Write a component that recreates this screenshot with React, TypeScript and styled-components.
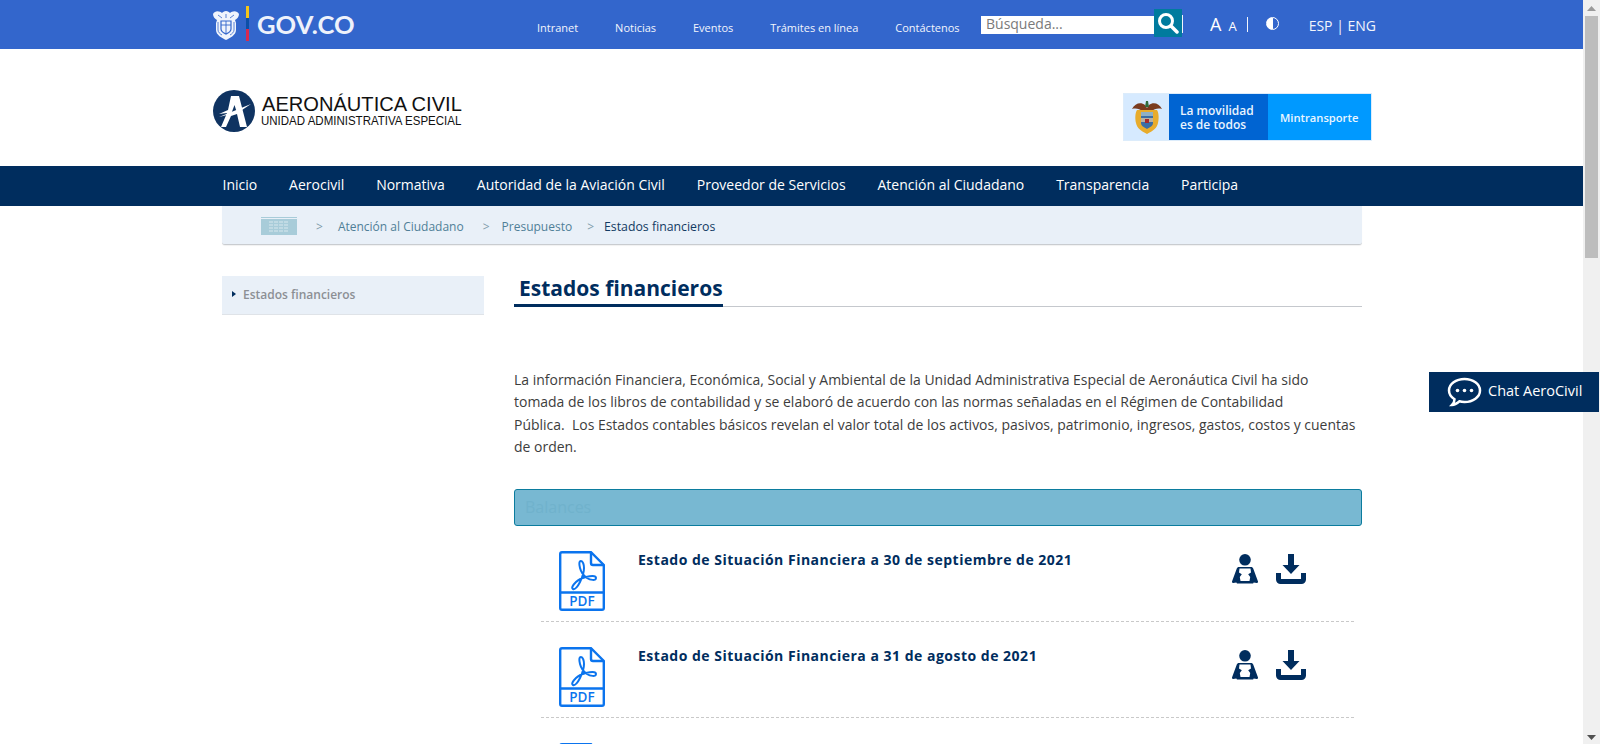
import React from "react";
import styled, { createGlobalStyle } from "styled-components";

const Global = createGlobalStyle`
  html, body { margin: 0; padding: 0; height: 100%; overflow: hidden; background: #fff; }
  body { font-family: "Open Sans", "Noto Sans", sans-serif; }
  * { box-sizing: border-box; }
`;

const Shell = styled.div`display: flex; width: 1600px; height: 744px; overflow: hidden;`;
const Page = styled.div`flex: 0 0 1583px; height: 744px; overflow: hidden; background: #fff;`;
const Track = styled.div`
  flex: 0 0 17px; height: 744px; background: #f0f0f0; display: flex; flex-direction: column;
  align-items: center; justify-content: space-between; padding: 6px 0 4px;
`;
const Thumb = styled.div`width: 13px; height: 242px; background: #bdbdbd; margin-top: 5px; margin-bottom: auto;`;
const Arrow = styled.svg`display: block; flex: none;`;

const TopBar = styled.header`height: 49px; background: #3366cc; color: #fff;`;
const TopInner = styled.div`width: 1175px; margin-left: 213px; height: 49px; display: flex; align-items: flex-start;`;
const GovLogo = styled.div`display: flex; align-items: flex-start; width: 324px; height: 49px; flex: none; padding-top: 6px;`;
const Tricolor = styled.div`
  width: 3px; height: 35px; margin: 0 8px 0 7px;
  background: linear-gradient(#f5c518 0 34%, #0d4fa8 34% 67%, #d9294f 67% 100%);
`;
const GovText = styled.span`font: 700 25.5px/36px Lato, sans-serif; letter-spacing: .1px; color: #eef2fb;`;
const TopLinks = styled.nav`display: flex; gap: 36.9px; font-size: 11px; padding-top: 20px; line-height: 16px; width: 444px; flex: none;`;
const TopLink = styled.a`color: #f2f5fc; white-space: nowrap;`;
const Search = styled.div`display: flex; align-items: flex-start; width: 201px; padding-top: 9px; flex: none;`;
const SearchInput = styled.div`
  width: 173px; height: 18px; margin-top: 7px; background: #fff; color: #7a7a7a;
  font-size: 14px; line-height: 16px; padding-left: 5px;
`;
const SearchButton = styled.div`width: 28px; height: 28px; background: #007b9e; display: flex; align-items: center; justify-content: center;`;
const Pipe = styled.span<{ $h?: number }>`display: block; width: 1px; background: #f2f5fc; height: ${p => p.$h ?? 18}px; flex: none;`;
const Tools = styled.div`display: flex; align-items: center; height: 49px; flex: 1; padding-bottom: 1px;`;
const BigA = styled.span`font-size: 18px; margin-left: 27px; line-height: 20px;`;
const SmallA = styled.span`font-size: 13px; margin-left: 7px; margin-right: 10px; line-height: 20px; padding-top: 3px;`;
const Contrast = styled.span`width: 13px; height: 13px; border-radius: 50%; margin: 0 30px 2px 18px; border: 1.5px solid #fff; background: linear-gradient(90deg, transparent 50%, #fff 50%); transform: scaleX(-1); flex: none;`;
const Lang = styled.span`font-size: 14px; color: #f2f5fc; white-space: nowrap; padding-top: 2px;`;

const BrandRow = styled.div`height: 117px; position: relative; display: flex; align-items: flex-start; justify-content: space-between; padding: 41px 211px 0 213px;`;
const AeroLogo = styled.div`display: flex; gap: 7px; height: 42px; align-items: center;`;
const AeroText = styled.div`display: flex; flex-direction: column; font-family: "Liberation Sans", Arial, sans-serif; color: #111;`;
const AeroMain = styled.span`font-size: 20.1px; line-height: 20px; white-space: nowrap; margin-bottom: 1px;`;
const AeroSub = styled.span`font-size: 13px; line-height: 12px; white-space: nowrap; transform: scaleX(.885); transform-origin: left center; width: 200px; margin-left: -1px; margin-bottom: 2px;`;
const Banner = styled.div`width: 249px; height: 48px; display: flex; margin-top: 3px; border: 1px solid #dcecfb;`;
const BannerShield = styled.div`width: 45px; background: #d6eaff; display: flex; align-items: center; justify-content: center;`;
const BannerBlue = styled.div`
  width: 99px; background: #0064d2; color: #eaf4ff; font-size: 12px; font-weight: 600; line-height: 14px;
  display: flex; flex-direction: column; justify-content: center; padding: 2px 0 0 11px;
`;
const BannerBright = styled.div`flex: 1; background: #0099ff; color: #eaf6ff; font-size: 11.2px; font-weight: 600; display: flex; align-items: center; padding-left: 12px;`;

const MainNav = styled.nav`height: 40px; background: #002d5e; display: flex; justify-content: center;`;
const NavInner = styled.div`width: 1140px; display: flex; gap: 31.9px; align-items: center; padding: 0 0 3px 1px;`;
const NavLink = styled.a`font-size: 14px; color: #fff; white-space: nowrap;`;

const Container = styled.div`width: 1140px; margin-left: 222px;`;
const Crumbs = styled.div`
  height: 39px; background: #e9f0f8; border-bottom: 1px solid #c9ccd0; border-radius: 0 0 3px 3px;
  box-shadow: 0 1px 1px rgba(0,0,0,.06); display: flex; align-items: center; padding: 2px 0 0 39px; font-size: 12px; color: #4f7f97;
`;
const CrumbSep = styled.span<{ $l: number; $r: number }>`margin: 0 ${p => p.$r}px 0 ${p => p.$l}px; color: #7f9cab;`;
const CrumbCurrent = styled.span`color: #123a63; font-size: 12.3px;`;

const Columns = styled.div`display: flex; gap: 30px; margin-top: 31px; align-items: flex-start;`;
const Side = styled.aside`
  flex: 0 0 262px; height: 39px; background: #e9f0f8; border-bottom: 1px solid #dfe3e8;
  display: flex; align-items: center; padding: 0 0 2px 10px; gap: 7px; color: #8c8f94; font-size: 12px; font-weight: 600;
`;
const Tri = styled.span`width: 0; height: 0; border-left: 4px solid #002d5e; border-top: 3px solid transparent; border-bottom: 3px solid transparent;`;
const Main = styled.main`flex: 1; min-width: 0;`;
const TitleBar = styled.div`border-bottom: 1px solid #c5c8cd; height: 31px; margin-bottom: 62px;`;
const Title = styled.h1`
  display: inline-block; margin: 0; height: 31px; padding: 0 0 0 5px; width: 209px; border-bottom: 3px solid #002d5e;
  font-size: 21px; line-height: 24px; font-weight: 700; color: #002d5e; white-space: nowrap;
`;
const Para = styled.p`margin: 0 0 30px; font-size: 13.97px; line-height: 22.4px; color: #3d3d3d;`;
const SectionBar = styled.div`
  height: 37px; background: #78b8d2; border: 1px solid #0b7c9e; border-radius: 3px;
  color: #70b2cc; font-size: 16px; line-height: 35px; padding-left: 10px;
`;
const List = styled.div`padding: 0 8px 0 27px;`;
const Row = styled.div`
  height: 96px; border-bottom: 1px dashed #c9c9c9; display: flex; padding: 25px 0 0 18px;
`;
const RowTitle = styled.a`flex: 1; margin-left: 33px; font-size: 14px; font-weight: 700; letter-spacing: .5px; line-height: 18px; color: #002d5e; white-space: nowrap;`;
const RowActions = styled.div`display: flex; gap: 18px; margin-right: 48px; margin-top: 3px;`;

const Chat = styled.div`
  position: fixed; left: 1429px; top: 372px; width: 170px; height: 40px; background: #002d5e; color: #fff;
  display: flex; align-items: center; padding-left: 18px; gap: 6px; font-size: 14.5px;
`;
const ChatLabel = styled.span`margin-bottom: 3px;`;

const Shield = () => (
  <svg width="26" height="30" viewBox="0 0 26 30" style={{ marginTop: 4 }}>
    <path d="M13 1c2 0 3 1 4 2 2-2 7-3 9 1 0 3-2 5-4 6l1 3v7c0 5-6 8-10 10C9 28 3 25 3 20v-7l1-3C2 9 0 7 0 4c2-4 7-3 9-1 1-1 2-2 4-2z" fill="#f0f4fc" />
    <path d="M8 11h10v8c0 3-3 4-5 5-2-1-5-2-5-5z" fill="none" stroke="#3366cc" strokeWidth="1.2" />
    <path d="M8 15h10M13 11v13" stroke="#3366cc" strokeWidth=".9" />
    <path d="M5 12v8c0 2 2 4 4 5M21 12v8c0 2-2 4-4 5M5 5l4 3M21 5l-4 3M13 4v4" fill="none" stroke="#3366cc" strokeWidth=".8" />
  </svg>
);

const AeroMark = () => (
  <svg width="42" height="42" viewBox="0 0 42 42" style={{ flex: "none" }}>
    <circle cx="21" cy="21" r="21" fill="#0f3361" />
    <path d="M18 6h8l8 31h-7l-3-13-6 2-5 11H8l6-14-8 1 9-4z" fill="#fff" />
    <path d="M21.500 15l-3 8 5-1.800z" fill="#0f3361" />
    <path d="M6 27l32-13-12 8z" fill="#fff" />
  </svg>
);

const ColorShield = () => (
  <svg width="32" height="36" viewBox="0 0 32 36">
    <path d="M1 10c3-6 9-7 13-4l2 3 2-3c4-3 10-2 13 4-4-1-8 0-10 2H11C9 10 5 9 1 10z" fill="#7a3b1e" />
    <path d="M6 11c-2 3-2 9-1 13 1 5 5 8 11 11 6-3 10-6 11-11 1-4 1-10-1-13z" fill="#e8ac2c" />
    <path d="M10 13h12v11c0 3-3 4-6 6-3-2-6-3-6-6z" fill="#3a6ea5" />
    <path d="M10 13h12v4H10z" fill="#8fb0c4" />
    <path d="M10 19h12v4H10z" fill="#b8b0a0" />
    <path d="M14 20h4v4h-4z" fill="#a52a2a" />
    <path d="M15 2l2 0 1 6h-4z" fill="#2f6b3a" />
  </svg>
);

const PdfIcon = ({ label = true }: { label?: boolean }) => (
  <svg width="46" height="60" viewBox="0 0 46 60" style={{ flex: "none" }}>
    <path d="M3 1.200h29L44.800 14v43a1.800 1.800 0 0 1-1.800 1.800H3A1.800 1.800 0 0 1 1.200 57V3A1.800 1.800 0 0 1 3 1.200z" fill="none" stroke="#0b74ee" strokeWidth="2.400" />
    <path d="M32 1.200V12a2 2 0 0 0 2 2h10.800M1.200 41.500h43.600" fill="none" stroke="#0b74ee" strokeWidth="2.400" />
    <path d="M22 9c-2 0-2 3-1 7 1 4 4 8 7 10 3 2 9 3 9 0 0-3-6-2-10-1-5 1-8 3-10 5-3 3-5 6-3 7 2 1 5-3 7-7 2-4 4-10 4-14 0-3-1-7-3-7z" transform="translate(0 1)" fill="none" stroke="#0b74ee" strokeWidth="2" strokeLinejoin="round" />
    {label && <text x="23" y="55" textAnchor="middle" fontFamily="'Open Sans', sans-serif" fontWeight="600" fontSize="13.500" fill="#0b74ee">PDF</text>}
  </svg>
);

const ReadIcon = () => (
  <svg width="26" height="30" viewBox="0 0 26 30">
    <circle cx="13" cy="5.800" r="5.800" fill="#002d5e" />
    <path d="M7 13h12c1 0 2 .6 2.300 1.700L26 27.500c.3 1-.5 1.600-1.300 1.500l-3-.5-.6 1H5l-.7-1-3 .5C.5 29.100-.3 28.500 0 27.500L4.700 14.700C5 13.600 6 13 7 13z" fill="#002d5e" />
    <path d="M7.500 14.500h11l.5 4-2.800 1.800 2 2.700-.7 4H8.500l-.7-4 2-2.700L7 18.500z" fill="#fff" />
  </svg>
);

const DownloadIcon = () => (
  <svg width="30" height="30" viewBox="0 0 30 30">
    <path d="M12 0h6v11h5.500L15 20 6.500 11H12z" fill="#002d5e" />
    <path d="M2.500 19v6.500a2 2 0 0 0 2 2h21a2 2 0 0 0 2-2V19" fill="none" stroke="#002d5e" strokeWidth="5" />
  </svg>
);

const BuildingIcon = () => (
  <svg width="36" height="18" viewBox="0 0 36 18">
    <rect width="36" height="18" fill="#a8ccd9" />
    <path d="M0 1.500h36" stroke="#e9f0f8" />
    <path d="M8 5h20M8 8h20M8 11h20M8 14h20" stroke="#d8e8ee" strokeWidth="1" strokeDasharray="4 1" />
  </svg>
);

const navItems = ["Inicio", "Aerocivil", "Normativa", "Autoridad de la Aviación Civil", "Proveedor de Servicios", "Atención al Ciudadano", "Transparencia", "Participa"];
const rows = ["Estado de Situación Financiera a 30 de septiembre de 2021", "Estado de Situación Financiera a 31 de agosto de 2021"];
const topLinks = ["Intranet", "Noticias", "Eventos", "Trámites en línea", "Contáctenos"];

export default function App() {
  return (
    <Shell>
      <Global />
      <Page>
        <TopBar>
          <TopInner>
            <GovLogo>
              <Shield />
              <Tricolor />
              <GovText>GOV.CO</GovText>
            </GovLogo>
            <TopLinks>
              {topLinks.map(t => <TopLink key={t}>{t}</TopLink>)}
            </TopLinks>
            <Search>
              <SearchInput>Búsqueda...</SearchInput>
              <SearchButton>
                <svg width="22" height="22" viewBox="0 0 22 22">
                  <circle cx="9" cy="9" r="6.500" fill="none" stroke="#fff" strokeWidth="3" />
                  <path d="M14 14l6 6" stroke="#fff" strokeWidth="3.500" strokeLinecap="round" />
                </svg>
              </SearchButton>
            </Search>
            <Tools>
              <Pipe $h={18} />
              <BigA>A</BigA>
              <SmallA>A</SmallA>
              <Pipe $h={15} />
              <Contrast />
              <Lang>ESP | ENG</Lang>
            </Tools>
          </TopInner>
        </TopBar>
        <BrandRow>
          <AeroLogo>
            <AeroMark />
            <AeroText>
              <AeroMain>AERONÁUTICA CIVIL</AeroMain>
              <AeroSub>UNIDAD ADMINISTRATIVA ESPECIAL</AeroSub>
            </AeroText>
          </AeroLogo>
          <Banner>
            <BannerShield><ColorShield /></BannerShield>
            <BannerBlue><span>La movilidad</span><span>es de todos</span></BannerBlue>
            <BannerBright>Mintransporte</BannerBright>
          </Banner>
        </BrandRow>
        <MainNav>
          <NavInner>
            {navItems.map(t => <NavLink key={t}>{t}</NavLink>)}
          </NavInner>
        </MainNav>
        <Container>
          <Crumbs>
            <BuildingIcon />
            <CrumbSep $l={19} $r={15}>&gt;</CrumbSep>
            <span>Atención al Ciudadano</span>
            <CrumbSep $l={19} $r={12}>&gt;</CrumbSep>
            <span>Presupuesto</span>
            <CrumbSep $l={15} $r={10}>&gt;</CrumbSep>
            <CrumbCurrent>Estados financieros</CrumbCurrent>
          </Crumbs>
          <Columns>
            <Side><Tri />Estados financieros</Side>
            <Main>
              <TitleBar><Title>Estados financieros</Title></TitleBar>
              <Para>
                La información Financiera, Económica, Social y Ambiental de la Unidad Administrativa Especial de Aeronáutica Civil ha sido
                <br />tomada de los libros de contabilidad y se elaboró de acuerdo con las normas señaladas en el Régimen de Contabilidad
                <br />Pública.&nbsp; Los Estados contables básicos revelan el valor total de los activos, pasivos, patrimonio, ingresos, gastos, costos y cuentas
                <br />de orden.
              </Para>
              <SectionBar>Balances</SectionBar>
              <List>
                {rows.map(t => (
                  <Row key={t}>
                    <PdfIcon />
                    <RowTitle>{t}</RowTitle>
                    <RowActions><ReadIcon /><DownloadIcon /></RowActions>
                  </Row>
                ))}
                <Row><PdfIcon label={false} /></Row>
              </List>
            </Main>
          </Columns>
        </Container>
      </Page>
      <Track>
        <Arrow width="9" height="5" viewBox="0 0 9 5"><path d="M4.500 0L9 5H0z" fill="#9a9a9a" /></Arrow>
        <Thumb />
        <Arrow width="9" height="5" viewBox="0 0 9 5"><path d="M4.500 5L9 0H0z" fill="#505050" /></Arrow>
      </Track>
      <Chat>
        <svg width="35" height="30" viewBox="0 0 35 30">
          <path d="M17.500 2C26 2 33 7 33 13.500S26 25 17.500 25c-2 0-3.500-.2-5-.7C10 26.500 7.500 28 5 28c1.500-1.500 2.500-3.500 2.500-5.800C4 20 2 17 2 13.500 2 7 9 2 17.500 2z" fill="none" stroke="#fff" strokeWidth="2.500" />
          <circle cx="10.500" cy="13.500" r="1.800" fill="#fff" /><circle cx="17.500" cy="13.500" r="1.800" fill="#fff" /><circle cx="24.500" cy="13.500" r="1.800" fill="#fff" />
        </svg>
        <ChatLabel>Chat AeroCivil</ChatLabel>
      </Chat>
    </Shell>
  );
}
